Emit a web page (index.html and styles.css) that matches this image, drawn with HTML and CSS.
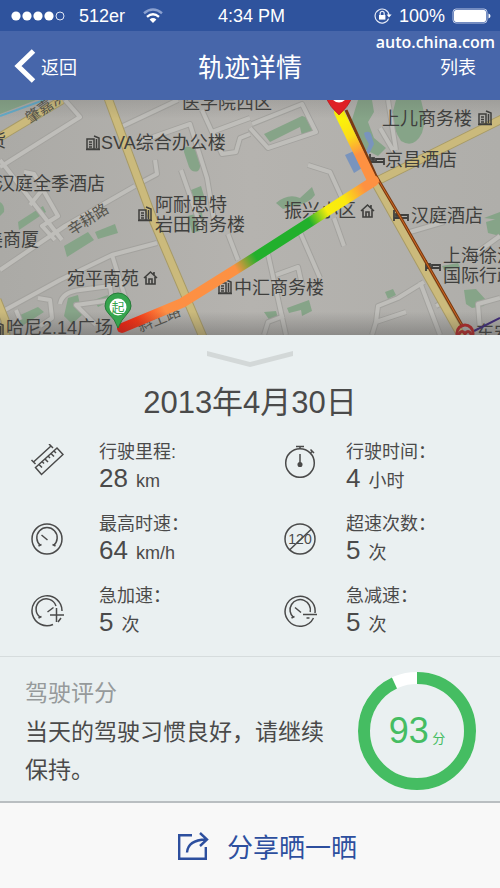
FILE: index.html
```html
<!DOCTYPE html>
<html lang="zh-CN">
<head>
    <meta charset="UTF-8">
    <meta name="viewport" content="width=device-width, initial-scale=1.0">
    <title>轨迹详情</title>
    <link rel="stylesheet" href="styles.css">
</head>
<body>
    <div class="status-bar">
        <div class="status-left">
            <svg width="54" height="12" viewBox="0 0 54 12">
                <g fill="#fff">
                    <circle cx="5" cy="6" r="4.6"/>
                    <circle cx="16" cy="6" r="4.6"/>
                    <circle cx="27" cy="6" r="4.6"/>
                    <circle cx="38" cy="6" r="4.6"/>
                </g>
                <circle cx="49" cy="6" r="4" fill="none" stroke="#dfe6f5"/>
            </svg>
            <span class="carrier">512er</span>
            <svg width="20" height="16" viewBox="0 0 20 16" fill="none" stroke-width="2.4">
                <path d="M1 5.2Q10-2.2 19 5.2" stroke="#8ba1d0"/>
                <path d="M4 8.8Q10 3.8 16 8.8" stroke="#fff"/>
                <path d="M6.6 11.4Q10 8.6 13.4 11.4L10 15z" fill="#fff"/>
            </svg>
        </div>
        <span class="time">4:34 PM</span>
        <div class="status-right">
            <svg width="18" height="16" viewBox="0 0 18 16" fill="none" stroke="#e6ebf7" stroke-width="1.2">
                <path d="M14.6 10.6A7 7 0 1 1 15 7"/>
                <path d="M12.6 6.6h5L15 9.6z" fill="#fff" stroke="none"/>
                <rect x="5" y="7" width="6.4" height="4.6" fill="#fff" stroke="none"/>
                <path d="M6.2 7V5.4a2 2 0 0 1 4 0V7"/>
            </svg>
            <span>100%</span>
            <svg width="40" height="16" viewBox="0 0 40 16">
                <rect x="1" y="1" width="34" height="14" rx="3" fill="none" stroke="#b9c6e4"/>
                <rect x="2" y="2" width="32" height="12" rx="2" fill="#fff"/>
                <path d="M36.5 5.5q2 .8 2 2.5t-2 2.5z" fill="#fff"/>
            </svg>
        </div>
    </div>

    <header class="nav">
        <a class="nav-back" href="#">
            <svg width="22" height="34" viewBox="0 0 22 34" fill="none" stroke="#fff" stroke-width="5">
                <path d="M19.5 2L4 17l15.5 15"/>
            </svg>
            返回
        </a>
        <h1>轨迹详情</h1>
        <a class="nav-list" href="#">列表</a>
        <span class="watermark">auto.china.com</span>
    </header>

    <svg class="map" viewBox="0 100 500 235" preserveAspectRatio="xMidYMid slice" role="img" aria-label="行驶轨迹">
        <defs>
            <linearGradient id="land" x1="0" y1="0" x2="1" y2="0">
                <stop offset="0" stop-color="#abaaa6"/>
                <stop offset="0.5" stop-color="#b5b3af"/>
                <stop offset="1" stop-color="#afaeaa"/>
            </linearGradient>
            <linearGradient id="shade" x1="0" y1="0" x2="0" y2="1">
                <stop offset="0" stop-color="#444" stop-opacity="0.15"/>
                <stop offset="0.08" stop-color="#444" stop-opacity="0"/>
                <stop offset="0.9" stop-color="#444" stop-opacity="0"/>
                <stop offset="1" stop-color="#444" stop-opacity="0.35"/>
            </linearGradient>
            <linearGradient id="leg1" gradientUnits="userSpaceOnUse" x1="122" y1="329" x2="374" y2="181">
                <stop offset="0" stop-color="#f51c0c"/>
                <stop offset="0.06" stop-color="#fa3412"/>
                <stop offset="0.16" stop-color="#fd8f44"/>
                <stop offset="0.44" stop-color="#fd9142"/>
                <stop offset="0.52" stop-color="#22b02c"/>
                <stop offset="0.74" stop-color="#22b02c"/>
                <stop offset="0.81" stop-color="#f8ee0c"/>
                <stop offset="0.88" stop-color="#fbe810"/>
                <stop offset="0.96" stop-color="#fd9142"/>
            </linearGradient>
            <linearGradient id="leg2" gradientUnits="userSpaceOnUse" x1="340" y1="112" x2="374" y2="181">
                <stop offset="0.1" stop-color="#fbf20a"/>
                <stop offset="0.35" stop-color="#fbdc18"/>
                <stop offset="0.6" stop-color="#fd9142"/>
            </linearGradient>
            <g id="streets" fill="none" stroke-linejoin="round">
                <path d="M0 167L80 117L65 100"/>
                <path d="M123 126L178 100"/>
                <path d="M136 143L190 124L207 178L216 232"/>
                <path d="M202 110L212 132L250 118M212 132L222 154L236 152L240 138L250 134"/>
                <path d="M140 183L157 174L155 160"/>
                <path d="M0 270L65 226L135 186"/>
                <path d="M0 160L45 218L62 240M30 205L42 190M24 172L34 174L58 216L42 226L55 240"/>
                <path d="M181 170L202 230"/>
                <path d="M5 310L60 280L112 255L157 243"/>
                <path d="M112 255L126 300"/>
                <path d="M20 320L16 310M38 298L50 300L52 318L40 326"/>
                <path d="M60 304Q62 292 80 290L110 286L112 300L76 305L96 325"/>
                <path d="M228 234L238 260"/>
                <path d="M250 128L268 148L316 132L302 104L252 124"/>
                <path d="M308 165L330 172L345 205"/>
                <path d="M334 218L344 246M300 232L320 278M268 254L286 335M276 275L298 267L302 285"/>
                <path d="M380 128L394 152M388 100L396 150"/>
                <path d="M410 232L444 222M472 256L500 236"/>
                <path d="M372 335L376 322L406 312M376 322L378 306L398 298L424 282M420 282L440 335M436 306L444 302"/>
                <path d="M500 298L478 304L480 330M264 335L268 322L284 316"/>
            </g>
            <g id="building" fill="none" stroke="#3f3f3d" stroke-width="1.5">
                <path d="M1 4h7v10H1zM8 1l5 2v11H8M0 14.5h14M3 7h3M3 9.5h3M3 12h3M10.5 4v9"/>
            </g>
            <g id="hotel" fill="none" stroke="#3f3f3d" stroke-width="1.8">
                <path d="M1 0v11M1 8h14v3M15 8V5H7v3"/>
                <rect x="3" y="4" width="2" height="2"/>
            </g>
            <g id="home" fill="none" stroke="#3f3f3d" stroke-width="1.6">
                <path d="M0 7l6.5-6L13 7M2 6v7h9V6M5 13V8h3v5M10 4V1"/>
            </g>
        </defs>

        <rect y="100" width="500" height="235" fill="url(#land)"/>

        <!-- parks and water -->
        <g fill="#86a488">
            <path d="M0 100h36L0 114z"/>
            <path d="M184 152q0-7 6-5q6 1 9 10q3 10-1 14q-6 2-9-4z"/>
            <path d="M191 190l10-4 4 13-12 4zM188 216l14-4 2 18-12 3z"/>
            <path d="M18 222l25-16 3 6-27 18zM0 202q5 3 4 10l-4 4z"/>
            <path d="M64 246l24-14 6 8-27 17zM95 232l20-8 3 9-20 6z"/>
            <path d="M68 298l10-3 4 20-10 9-8-8zM18 316l20-9 6 5-22 14zM94 300l14-5 2 6-12 6z"/>
            <path d="M264 134l38-18 10 3 2 14-12 3-2-9-30 15z"/>
            <path d="M358 100h14l2 12-6 10 6 16 12 10-8 8-16-8-12-22z"/>
            <path d="M396 100h25q6 20 1 33q-8 16-21 8q-8-12-9-26z"/>
            <path d="M276 203q12-10 24-5l12-11 3 8q-6 9-22 11l-10 3z"/>
            <path d="M264 312l12-1 2 7-8 3zM287 308l22-8 3 11-10 5-1-6-12 3z"/>
            <path d="M385 292l8-3 3 6-8 4zM464 290l12-1 10 11-2 6-12 2-6-4z"/>
            <path d="M486 222l14-4v18l-12-3zM442 266l16-3 2 4-16 3zM484 218l16-6v8z"/>
        </g>

        <use href="#streets" stroke="#a3a29e" stroke-width="6"/>
        <use href="#streets" stroke="#bfbeba" stroke-width="4"/>

        <g fill="#7994bd">
            <path d="M345 155l9-4 8 17-8 5z"/>
            <path d="M364 133q5-3 7 1l3 10-5 10-3-2 3-8-4-7z"/>
        </g>
        <path d="M0 116L44 100" stroke="#62aac8" stroke-width="2"/>

        <!-- main roads -->
        <g fill="none" stroke="#a89b66" stroke-width="9">
            <path d="M0 137L62 100"/>
            <path d="M108 98L154 222L203 337"/>
            <path d="M375 182L502 119M375 182L462 337"/>
            <path d="M-3 300L5 320L6 336"/>
        </g>
        <g fill="none" stroke="#cbba7c" stroke-width="7">
            <path d="M0 137L62 100"/>
            <path d="M108 98L154 222L203 337"/>
            <path d="M375 182L502 119M375 182L462 337"/>
            <path d="M-3 300L5 320L6 336"/>
        </g>

        <g class="map-label">
            <text x="182" y="109">医学院西区</text>
            <text x="-12" y="147">货</text>
            <text x="101" y="149">SVA综合办公楼</text>
            <text x="-3" y="190">汉庭全季酒店</text>
            <text x="155" y="211">阿耐思特</text>
            <text x="155" y="231">岩田商务楼</text>
            <text x="-15" y="246">美商厦</text>
            <text x="67" y="285">宛平南苑</text>
            <text x="6" y="334">哈尼2.14广场</text>
            <text x="234" y="294">中汇商务楼</text>
            <text x="284" y="217">振兴小区</text>
            <text x="382" y="125">上儿商务楼</text>
            <text x="385" y="166">京昌酒店</text>
            <text x="411" y="222">汉庭酒店</text>
            <text x="443" y="262">上海徐汇</text>
            <text x="443" y="282">国际行政</text>
            <text x="476" y="339">东安路</text>
        </g>
        <g class="map-street">
            <text transform="translate(30 124) rotate(-35)">肇嘉浜路</text>
            <text transform="translate(72 236) rotate(-33)">辛耕路</text>
            <text transform="translate(140 332) rotate(-22)">斜土路</text>
        </g>

        <use href="#building" x="86" y="135"/>
        <use href="#building" x="138" y="206"/>
        <use href="#building" x="218" y="279"/>
        <use href="#building" x="478" y="110"/>
        <use href="#building" x="-10" y="322"/>
        <use href="#home" x="144" y="271"/>
        <use href="#home" x="361" y="204"/>
        <use href="#hotel" x="369" y="154"/>
        <use href="#hotel" x="393" y="210"/>
        <use href="#hotel" x="425" y="260"/>

        <path d="M474 331L500 318" stroke="#3d2878" stroke-width="2"/>

        <!-- driven route -->
        <path d="M346 110L376 176L402 220L463 327" fill="none" stroke="#7b3a12" stroke-width="3"/>
        <path d="M376 176L402 220L463 327" fill="none" stroke="#cf6a22" stroke-width="1"/>
        <path d="M122 328L182 303L246 263L374 181" fill="none" stroke="url(#leg1)" stroke-width="10" stroke-linecap="round" stroke-linejoin="round"/>
        <path d="M339 112L372 180" fill="none" stroke="url(#leg2)" stroke-width="10" stroke-linecap="round"/>

        <g fill="none" stroke="#b32626" stroke-width="3">
            <circle cx="465" cy="333" r="8"/>
            <path d="M459 337v-3q3-5 6 0q3-5 6 0v3"/>
        </g>

        <rect y="100" width="500" height="235" fill="url(#shade)"/>

        <!-- end pin, cut off by the header -->
        <path d="M326 98Q330 107 339 115Q348 107 352 98z" fill="#df2026" stroke="#a81a1c" stroke-width="0.6"/>
        <path d="M331 98q8 9 16 0z" fill="#fff"/>

        <!-- start pin -->
        <path d="M118 328Q115 319 109 314Q105 310 105 306A13 13 0 0 1 131 306Q131 310 127 314Q121 320 118 328z" fill="#36a44e" stroke="#257a38"/>
        <circle cx="118" cy="307" r="8.5" fill="#fff"/>
        <text class="pin-text" x="118" y="312">起</text>
    </svg>

    <main class="panel">
        <button class="handle" type="button" aria-label="展开">
            <svg width="86" height="16" viewBox="0 0 86 16">
                <path d="M0 0v5l43 11 43-11V0L43 11z" fill="#d3d8d8"/>
            </svg>
        </button>
        <h2>2013年4月30日</h2>

        <div class="stats">
            <div class="stat">
                <svg class="icon" viewBox="0 0 34 34">
                    <path d="M5.5 23.5L27 4l6 6.5L11.500 30.500z"/>
                    <path d="M9 20.500l3 3M12 17.500l2 2M15 15l3 3M18 12l2 2M21 9.500l3 3M24 7l2 2"/>
                    <path d="M1.500 16l4 4M3.500 18L21 2M19 0l4 4"/>
                </svg>
                <p>行驶里程:<br><strong>28</strong> km</p>
            </div>
            <div class="stat">
                <svg class="icon" viewBox="0 0 34 34">
                    <circle cx="17" cy="19" r="14.300"/>
                    <path d="M13 2.500h8M17 2.500v2M17 10v10M27.500 5.500l3.500 3.500M29.500 7l-2 2"/>
                    <circle cx="17" cy="20.500" r="1.800" fill="#4a4a4a"/>
                </svg>
                <p>行驶时间：<br><strong>4</strong> 小时</p>
            </div>
            <div class="stat">
                <svg class="icon" viewBox="0 0 34 34">
                    <circle cx="17" cy="17" r="15"/>
                    <path d="M8.500 24l3-1.500M10.500 23.500A10.200 10.200 0 1 1 23.500 23.500M25.500 24l-3-1.500M11.500 13l6 5"/>
                </svg>
                <p>最高时速：<br><strong>64</strong> km/h</p>
            </div>
            <div class="stat">
                <svg class="icon" viewBox="0 0 34 34">
                    <circle cx="17" cy="17" r="15"/>
                    <text x="17" y="22">120</text>
                    <path d="M6.500 28L28.500 7"/>
                </svg>
                <p>超速次数：<br><strong>5</strong> 次</p>
            </div>
            <div class="stat">
                <svg class="icon" viewBox="0 0 34 34">
                    <path d="M32 17A15 15 0 1 0 23 30.500M28 28l3-4"/>
                    <path d="M8.500 24l3-1.500M10.500 23.500A10.200 10.200 0 1 1 26 12M17.500 18l6-4.500"/>
                    <path d="M26.500 14v14M20 21h14"/>
                </svg>
                <p>急加速：<br><strong>5</strong> 次</p>
            </div>
            <div class="stat">
                <svg class="icon" viewBox="0 0 34 34">
                    <path d="M32 19A15 15 0 1 0 30.500 24"/>
                    <path d="M8.500 24l3-1.500M10.500 23.500A10.200 10.200 0 1 1 27.200 18M12 13.500l6 5M20 20.500h14M23.500 24h3"/>
                </svg>
                <p>急减速：<br><strong>5</strong> 次</p>
            </div>
        </div>

        <section class="score">
            <div class="score-text">
                <h3>驾驶评分</h3>
                <p>当天的驾驶习惯良好，请继续保持。</p>
            </div>
            <div class="ring">
                <svg viewBox="0 0 118 118">
                    <circle cx="59" cy="59" r="53" fill="none" stroke="#fff" stroke-width="12"/>
                    <circle cx="59" cy="59" r="53" fill="none" stroke="#45bd62" stroke-width="12" pathLength="100" stroke-dasharray="93 7" transform="rotate(-90 59 59)"/>
                </svg>
                <p class="ring-value"><strong>93</strong> 分</p>
            </div>
        </section>
    </main>

    <footer class="footer">
        <button class="share" type="button">
            <svg width="32" height="30" viewBox="0 0 32 30" fill="none" stroke="#2d4f9e" stroke-width="2.4">
                <path d="M15 4.200H2.200V27.800H28.800V16"/>
                <path d="M10 21.500Q11 9 29 8.500M23 2l7 6.500-7 6.500"/>
            </svg>
            分享晒一晒
        </button>
    </footer>
</body>
</html>
```
FILE: styles.css
```css
* {
    box-sizing: border-box;
}

body {
    margin: 0;
    min-height: 100vh;
    display: flex;
    flex-direction: column;
    font-family: "Liberation Sans", "Noto Sans CJK SC", sans-serif;
    color: #4a4a4a;
    background-color: #eaf0f1;
}

h1, h2, h3, p {
    margin: 0;
    font-weight: normal;
}

a {
    color: inherit;
    text-decoration: none;
}

button {
    border: none;
    padding: 0;
    background: none;
    font-family: inherit;
    cursor: pointer;
}

svg {
    display: block;
    flex-shrink: 0;
}

.status-bar {
    display: grid;
    grid-template-columns: 1fr auto 1fr;
    align-items: center;
    height: 31px;
    padding: 1px 8px 0 11px;
    font-size: 18px;
    color: #fff;
    background-color: #2f539d;
}

.status-left,
.status-right {
    display: flex;
    align-items: center;
}

.status-left {
    gap: 14px;
}

.status-left .carrier {
    margin-right: 4px;
}

.status-right {
    justify-content: flex-end;
    gap: 7px;
}

.nav {
    position: relative;
    display: grid;
    grid-template-columns: 1fr auto 1fr;
    align-items: center;
    height: 69px;
    padding: 0 24px 0 14px;
    font-size: 18px;
    color: #fff;
    background-color: #4766aa;
}

.nav h1 {
    font-size: 26px;
    padding-left: 10px;
}

.nav-back {
    display: flex;
    align-items: center;
    gap: 5px;
}

.nav-list {
    text-align: right;
}

.watermark {
    position: absolute;
    top: 0;
    right: 5px;
    font-family: "Open Sans", "Noto Sans", sans-serif;
    font-size: 16px;
    font-weight: 600;
    line-height: 22px;
}

.map {
    width: 100%;
    height: auto;
}

.map-label {
    font-size: 18px;
    fill: #3f3f3d;
}

.map-street {
    font-size: 15px;
    fill: #55544c;
}

.pin-text {
    font-size: 13px;
    text-anchor: middle;
    fill: #36a44e;
}

.panel {
    flex: 1;
    display: flex;
    flex-direction: column;
}

.handle {
    align-self: center;
    margin-top: 16px;
}

.panel h2 {
    margin-top: 16px;
    font-size: 31px;
    line-height: 40px;
    text-align: center;
}

.stats {
    display: grid;
    grid-template-columns: 1fr 1fr;
    row-gap: 17px;
    padding: 16px 0 18px;
}

.stat {
    display: flex;
    align-items: center;
    gap: 35px;
    padding-left: 30px;
    font-size: 18px;
    line-height: 26px;
}

.stat:nth-child(even) {
    gap: 29px;
    padding-left: 33px;
}

.stat strong {
    margin-right: 3px;
    font-size: 26px;
    font-weight: normal;
}

.icon {
    width: 34px;
    height: 34px;
    fill: none;
    stroke: #4a4a4a;
    stroke-width: 1.5;
}

.stat:nth-child(-n+2) .icon {
    margin-bottom: 12px;
}

.icon text {
    font-size: 14px;
    text-anchor: middle;
    fill: #4a4a4a;
    stroke: none;
}

.score {
    flex: 1;
    display: flex;
    align-items: center;
    gap: 20px;
    padding: 14px 24px 10px 25px;
    border-top: 1px solid #d6dcdd;
}

.score-text {
    flex: 1;
    font-size: 23px;
    line-height: 38px;
}

.score-text h3 {
    font-size: 23px;
    line-height: 40px;
    color: #969a9b;
}

.ring {
    display: grid;
    align-items: center;
    justify-items: center;
    width: 118px;
}

.ring svg,
.ring-value {
    grid-area: 1 / 1;
}

.ring svg {
    width: 100%;
}

.ring-value {
    font-size: 13px;
    color: #45bd62;
}

.ring-value strong {
    font-size: 36px;
    font-weight: normal;
}

.footer {
    display: flex;
    justify-content: center;
    height: 87px;
    border-top: 2px solid #b9bec1;
    background-color: #f8f8f8;
}

.share {
    display: flex;
    align-items: center;
    gap: 18px;
    padding-left: 34px;
    font-size: 26px;
    color: #2d4f9e;
}
```
